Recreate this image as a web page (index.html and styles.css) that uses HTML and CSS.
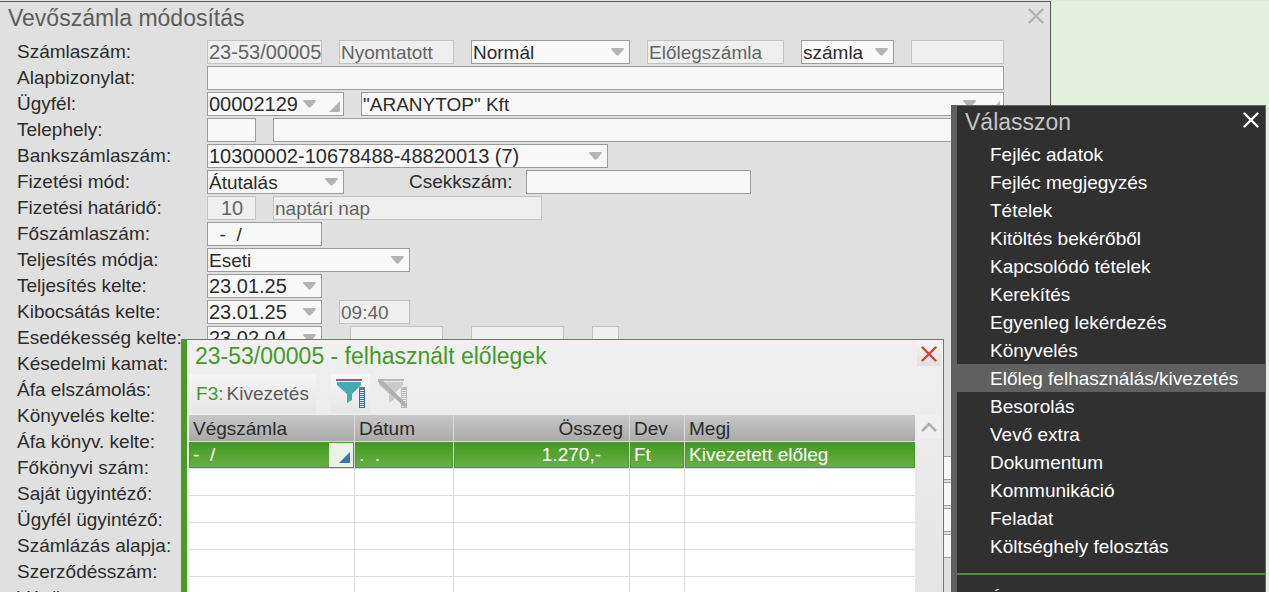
FILE: index.html
```
<!DOCTYPE html>
<html lang="hu">
  <head>
    <meta charset="UTF-8" />
    <meta name="viewport" content="width=device-width, initial-scale=1.0" />
    <title>Vevőszámla módosítás</title>
    <link rel="stylesheet" href="styles.css">
  </head>

  <body>
    <div class="desktop">
      <main class="window">
        <header class="window-header">
          <h1>Vevőszámla módosítás</h1>
          <button type="button" class="close-btn" aria-label="Bezárás">
            <svg width="16" height="16" viewBox="0 0 16 16"><path d="M1.5 1.5l13 13M14.5 1.5l-13 13" /></svg>
          </button>
        </header>

        <form class="invoice-form">
          <div class="row">
            <label for="szamlaszam">Számlaszám:</label>
            <input type="text" id="szamlaszam" class="w-code num" value="23-53/00005" disabled />
            <input type="text" class="w-code" value="Nyomtatott" aria-label="Állapot" disabled />
            <select class="w-type" aria-label="Típus"><option>Normál</option></select>
            <input type="text" class="w-ref" value="Előlegszámla" aria-label="Jelleg" disabled />
            <select class="w-mid" aria-label="Bizonylat"><option>számla</option></select>
            <input type="text" class="w-mid" aria-label="Kód" disabled />
          </div>
          <div class="row">
            <label for="alap">Alapbizonylat:</label>
            <input type="text" id="alap" class="w-full" />
          </div>
          <div class="row">
            <label for="ugyfel">Ügyfél:</label>
            <input type="text" id="ugyfel" class="w-ref num lookup" value="00002129" />
            <input type="text" class="w-full lookup" value='"ARANYTOP" Kft' aria-label="Ügyfél neve" />
          </div>
          <div class="row">
            <label for="telephely">Telephely:</label>
            <input type="text" id="telephely" class="w-short" />
            <input type="text" class="w-full" aria-label="Telephely neve" />
          </div>
          <div class="row">
            <label for="bank">Bankszámlaszám:</label>
            <select id="bank" class="w-bank num"><option>10300002-10678488-48820013 (7)</option></select>
          </div>
          <div class="row">
            <label for="fizmod">Fizetési mód:</label>
            <select id="fizmod" class="w-ref"><option>Átutalás</option></select>
            <label for="csekk" class="inner-label">Csekkszám:</label>
            <input type="text" id="csekk" class="w-check" />
          </div>
          <div class="row">
            <label for="hatarido">Fizetési határidő:</label>
            <input type="text" id="hatarido" class="w-short num center" value="10" disabled />
            <input type="text" class="w-unit" value="naptári nap" aria-label="Egység" disabled />
          </div>
          <div class="row">
            <label for="foszamla">Főszámlaszám:</label>
            <input type="text" id="foszamla" class="w-code" value="  -  /" />
          </div>
          <div class="row">
            <label for="telmod">Teljesítés módja:</label>
            <select id="telmod" class="w-mode"><option>Eseti</option></select>
          </div>
          <div class="row">
            <label for="telkelt">Teljesítés kelte:</label>
            <input type="text" id="telkelt" class="w-code num date" value="23.01.25" />
          </div>
          <div class="row">
            <label for="kibkelt">Kibocsátás kelte:</label>
            <input type="text" id="kibkelt" class="w-code num date" value="23.01.25" />
            <input type="text" class="w-time" value="09:40" aria-label="Időpont" disabled />
          </div>
          <div class="row wide-gap">
            <label for="esedkelt">Esedékesség kelte:</label>
            <input type="text" id="esedkelt" class="w-code num date" value="23.02.04" />
            <input type="text" class="w-mid" aria-label="Esedékesség 2" disabled />
            <input type="text" class="w-mid" aria-label="Esedékesség 3" disabled />
            <input type="text" class="w-flag" aria-label="Jelölés" disabled />
          </div>
          <div class="row">
            <label for="kamat">Késedelmi kamat:</label>
            <input type="text" id="kamat" class="w-code" />
          </div>
          <div class="row">
            <label for="afaelsz">Áfa elszámolás:</label>
            <input type="text" id="afaelsz" class="w-mode" />
          </div>
          <div class="row">
            <label for="konyvkelt">Könyvelés kelte:</label>
            <input type="text" id="konyvkelt" class="w-code" />
          </div>
          <div class="row">
            <label for="afakelt">Áfa könyv. kelte:</label>
            <input type="text" id="afakelt" class="w-code" />
          </div>
          <div class="row">
            <label for="fokonyv">Főkönyvi szám:</label>
            <input type="text" id="fokonyv" class="w-full" />
          </div>
          <div class="row">
            <label for="sajat">Saját ügyintéző:</label>
            <input type="text" id="sajat" class="w-full" />
          </div>
          <div class="row">
            <label for="ugyint">Ügyfél ügyintéző:</label>
            <input type="text" id="ugyint" class="w-full" />
          </div>
          <div class="row">
            <label for="szamlalap">Számlázás alapja:</label>
            <input type="text" id="szamlalap" class="w-full" />
          </div>
          <div class="row">
            <label for="szerzodes">Szerződésszám:</label>
            <input type="text" id="szerzodes" class="w-code" />
          </div>
          <div class="row">
            <label for="vegosszeg">Végösszeg:</label>
            <input type="text" id="vegosszeg" class="w-code" />
          </div>
        </form>
      </main>

      <section class="popup">
        <header class="popup-header">
          <h2>23-53/00005 - felhasznált előlegek</h2>
          <button type="button" class="popup-close" aria-label="Bezárás">
            <svg width="16" height="16" viewBox="0 0 16 16"><path d="M1.5 1.5l13 13M14.5 1.5l-13 13" /></svg>
          </button>
        </header>

        <div class="toolbar">
          <button type="button" class="action-btn"><span class="key">F3:</span>Kivezetés</button>
          <button type="button" class="icon-btn" aria-label="Szűrő">
            <svg width="29" height="30" viewBox="0 0 29 30">
              <rect x="0" y="0" width="26" height="2" fill="#8a5a9e" />
              <path d="M1 3h24v3l-9 9v6l-5 3v-9L1 6z" fill="#43acb1" />
              <rect x="23" y="8" width="6" height="21" fill="#47689f" />
              <rect x="23" y="8" width="6" height="3" fill="#777" />
              <path d="M26 11v17" stroke="#e6eefa" stroke-width="4" stroke-dasharray="1 1" />
            </svg>
          </button>
          <button type="button" class="icon-btn plain" aria-label="Szűrő törlése">
            <svg width="29" height="30" viewBox="0 0 29 30">
              <rect x="0" y="0" width="26" height="2" fill="#b9b9b9" />
              <path d="M1 3h24v3l-9 9v6l-5 3v-9L1 6z" fill="#cbcbcb" />
              <rect x="23" y="8" width="6" height="21" fill="#bbb" />
              <path d="M26 11v17" stroke="#eee" stroke-width="4" stroke-dasharray="1 1" />
              <path d="M1 1l27 26" stroke="#b0b0b0" stroke-width="4" />
            </svg>
          </button>
        </div>

        <div class="grid-area">
          <table class="advances">
            <colgroup>
              <col class="col-invoice" />
              <col class="col-date" />
              <col class="col-amount" />
              <col class="col-currency" />
              <col />
            </colgroup>
            <thead>
              <tr>
                <th>Végszámla</th>
                <th>Dátum</th>
                <th class="right">Összeg</th>
                <th>Dev</th>
                <th>Megj</th>
              </tr>
            </thead>
            <tbody>
              <tr class="selected">
                <td>
                  <div class="pick-cell">
                    <span>-&nbsp; /</span>
                    <button type="button" class="pick-btn" aria-label="Kiválasztás">
                      <svg width="11" height="11" viewBox="0 0 11 11"><path d="M11 0v10a1 1 0 0 1-1 1H0z" fill="#3f72b5" /></svg>
                    </button>
                  </div>
                </td>
                <td>.&nbsp; .</td>
                <td class="amount">1.270,-</td>
                <td>Ft</td>
                <td>Kivezetett előleg</td>
              </tr>
              <tr><td></td><td></td><td></td><td></td><td></td></tr>
              <tr><td></td><td></td><td></td><td></td><td></td></tr>
              <tr><td></td><td></td><td></td><td></td><td></td></tr>
              <tr><td></td><td></td><td></td><td></td><td></td></tr>
              <tr><td></td><td></td><td></td><td></td><td></td></tr>
            </tbody>
          </table>
          <div class="scroll">
            <button type="button" class="scroll-btn" aria-label="Fel">
              <svg width="16" height="10" viewBox="0 0 16 10"><path d="M1 9l7-7 7 7" fill="none" stroke="#b0b0b0" stroke-width="2.6" /></svg>
            </button>
          </div>
        </div>
      </section>

      <nav class="menu">
        <header class="menu-header">
          <h2>Válasszon</h2>
          <button type="button" class="close-btn light" aria-label="Bezárás">
            <svg width="16" height="16" viewBox="0 0 16 16"><path d="M1.5 1.5l13 13M14.5 1.5l-13 13" /></svg>
          </button>
        </header>
        <ul>
          <li><a href="#">Fejléc adatok</a></li>
          <li><a href="#">Fejléc megjegyzés</a></li>
          <li><a href="#">Tételek</a></li>
          <li><a href="#">Kitöltés bekérőből</a></li>
          <li><a href="#">Kapcsolódó tételek</a></li>
          <li><a href="#">Kerekítés</a></li>
          <li><a href="#">Egyenleg lekérdezés</a></li>
          <li><a href="#">Könyvelés</a></li>
          <li><a href="#" class="active">Előleg felhasználás/kivezetés</a></li>
          <li><a href="#">Besorolás</a></li>
          <li><a href="#">Vevő extra</a></li>
          <li><a href="#">Dokumentum</a></li>
          <li><a href="#">Kommunikáció</a></li>
          <li><a href="#">Feladat</a></li>
          <li><a href="#">Költséghely felosztás</a></li>
        </ul>
        <ul class="menu-extra">
          <li><a href="#">Á</a></li>
        </ul>
      </nav>
    </div>
  </body>
</html>
```
FILE: styles.css
```
* {
  box-sizing: border-box;
}

body {
  margin: 0;
  background-color: #e2f0de;
  color: #2c2c2c;
  font-family: "Liberation Sans", Arial, sans-serif;
  font-size: 19px;
}

h1,
h2 {
  margin: 0;
  font-size: 23px;
  font-weight: normal;
  line-height: 28px;
}

button,
input,
select {
  font: inherit;
  margin: 0;
  border-radius: 0;
}

button {
  display: flex;
  align-items: center;
  justify-content: center;
  padding: 0;
  border: none;
  background: none;
  cursor: pointer;
}

.desktop {
  position: relative;
  height: 100vh;
  overflow: hidden;
  border-top: 1px solid #dfe6dd;
}

/* main invoice window */
.window {
  margin-right: 218px;
  min-height: 100%;
  background-color: #e0e0e0;
  border-top: 1px solid #5a5a5a;
  border-right: 1px solid #5a5a5a;
}

.window-header {
  display: flex;
  justify-content: space-between;
  padding: 2px 6px 8px 8px;
  color: #5c5c5c;
}

.close-btn {
  width: 16px;
  height: 24px;
}

.close-btn path {
  stroke: #b2b2b2;
  stroke-width: 2.4;
  stroke-linecap: round;
}

.invoice-form {
  display: flex;
  flex-direction: column;
  gap: 2px;
  padding: 0 46px 0 17px;
}

.row {
  display: flex;
  gap: 17px;
  height: 24px;
}

.row.wide-gap {
  gap: 28px;
}

.row > label:first-child {
  width: 190px;
  flex: none;
  margin-right: -17px;
  line-height: 24px;
  white-space: nowrap;
}

.row.wide-gap > label:first-child {
  margin-right: -28px;
}

.row .inner-label {
  width: 148px;
  padding-left: 48px;
  line-height: 24px;
}

input,
select {
  flex: none;
  height: 24px;
  padding: 0 0 0 1px;
  border: 1px solid #9c9c9c;
  background-color: #f8f8f8;
  color: #2c2c2c;
  white-space: pre;
}

input {
  padding-top: 1px;
}

select,
.date,
.lookup {
  appearance: none;
  background-image: url("data:image/svg+xml,%3Csvg xmlns='http://www.w3.org/2000/svg' width='13' height='8'%3E%3Cpath d='M1 0h11q1 0 1 1L7.500 7.500h-2L0 1q0-1 1-1z' fill='%23b4b4b4'/%3E%3C/svg%3E");
  background-repeat: no-repeat;
  background-position: right 5px top 7px;
}

.lookup {
  background-image:
    url("data:image/svg+xml,%3Csvg xmlns='http://www.w3.org/2000/svg' width='13' height='8'%3E%3Cpath d='M1 0h11q1 0 1 1L7.500 7.500h-2L0 1q0-1 1-1z' fill='%23b4b4b4'/%3E%3C/svg%3E"),
    url("data:image/svg+xml,%3Csvg xmlns='http://www.w3.org/2000/svg' width='11' height='11'%3E%3Cpath d='M11 0v10q0 1-1 1H0z' fill='%23b4b4b4'/%3E%3C/svg%3E");
  background-position: right 27px top 7px, right 3px top 8px;
}

input:disabled {
  border-color: #c2c2c2;
  background-color: #efefef;
  color: #646464;
}

.num {
  padding-top: 0;
  font-size: 20px;
}

.center {
  text-align: center;
}

.w-code { width: 115px; }
.w-type { width: 159px; }
.w-ref { width: 137px; }
.w-mid { width: 93px; }
.w-short { width: 49px; }
.w-bank { width: 401px; }
.w-check { width: 225px; }
.w-unit { width: 269px; }
.w-mode { width: 203px; }
.w-time { width: 71px; }
.w-flag { width: 27px; }

.w-full {
  flex: 1;
  min-width: 0;
}

/* advances popup */
.popup {
  position: absolute;
  top: 338px;
  right: 325px;
  bottom: 0;
  left: 181px;
  overflow: hidden;
  border: 1px solid #4a9a2a;
  border-left: 6px solid #4a9a24;
  border-bottom: none;
  background: linear-gradient(#f0f0f0, #e4e4e4);
}

.popup-header {
  display: flex;
  justify-content: space-between;
  height: 34px;
  padding: 2px 2px 0 8px;
  color: #45992a;
}

.popup-close {
  width: 24px;
  height: 24px;
  background: linear-gradient(#f4f4f4, #e0e0e0);
}

.popup-close path {
  stroke: #c9482e;
  stroke-width: 2.4;
  stroke-linecap: round;
}

.toolbar {
  display: flex;
  padding-left: 2px;
  height: 41px;
}

.action-btn {
  width: 127px;
  height: 39px;
  margin-right: 15px;
  background: linear-gradient(#f4f4f4, #e6e6e6);
  color: #5a5a5a;
}

.key {
  margin-right: 3px;
  color: #45992a;
}

.icon-btn {
  width: 39px;
  height: 39px;
  background: linear-gradient(#f7f7f7, #e6e6e6);
}

.icon-btn.plain {
  margin-left: 3px;
  background: none;
}

.grid-area {
  display: flex;
  padding-left: 2px;
}

.advances {
  flex: 1;
  width: 0;
  border-collapse: separate;
  border-spacing: 0;
  table-layout: fixed;
}

.col-invoice { width: 166px; }
.col-date { width: 99px; }
.col-amount { width: 176px; }
.col-currency { width: 55px; }

th,
td {
  height: 27px;
  padding: 0 4px;
  border-right: 1px solid #dcdcdc;
  border-bottom: 1px solid #dcdcdc;
  background-color: #fff;
  line-height: 26px;
  text-align: left;
  font-weight: normal;
  white-space: nowrap;
}

th:last-child,
td:last-child {
  border-right: none;
}

th {
  padding-top: 2px;
  background: linear-gradient(#c8c8c8, #a9a9a9);
  line-height: 24px;
}

.selected td {
  background: linear-gradient(#42991f, #6bb04a);
  box-shadow: inset 0 0 0 1px #4a9530;
  color: #fff;
}

th.right {
  padding-right: 6px;
  text-align: right;
}

.selected .amount {
  padding-right: 28px;
  text-align: right;
}

.pick-cell {
  display: flex;
  justify-content: space-between;
  margin-right: -3px;
}

.pick-btn {
  width: 24px;
  height: 24px;
  align-self: center;
  padding: 4px 0 0 6px;
  background-color: #e9f3e4;
}

.scroll {
  width: 28px;
}

.scroll-btn {
  width: 24px;
  height: 24px;
  margin-left: 2px;
  background-color: #f0f0f0;
}

/* side menu */
.menu {
  position: absolute;
  top: 104px;
  right: 3px;
  bottom: 0;
  width: 315px;
  overflow: hidden;
  border: 1px solid #5f655d;
  border-left: 6px solid #606060;
  border-bottom: none;
  background-color: #303030;
}

.menu-header {
  display: flex;
  justify-content: space-between;
  height: 34px;
  padding: 2px 6px 0 8px;
  color: #c4c4c4;
}

.close-btn.light path {
  stroke: #fff;
}

.menu ul {
  margin: 0;
  padding: 0;
  list-style: none;
}

.menu a {
  display: block;
  padding: 2px 0 0 33px;
  color: #fff;
  line-height: 26px;
  text-decoration: none;
}

.menu a.active {
  background-color: #606060;
}

.menu .menu-extra {
  margin-top: 13px;
  padding-top: 9px;
  border-top: 2px solid #4f8f35;
}
```
